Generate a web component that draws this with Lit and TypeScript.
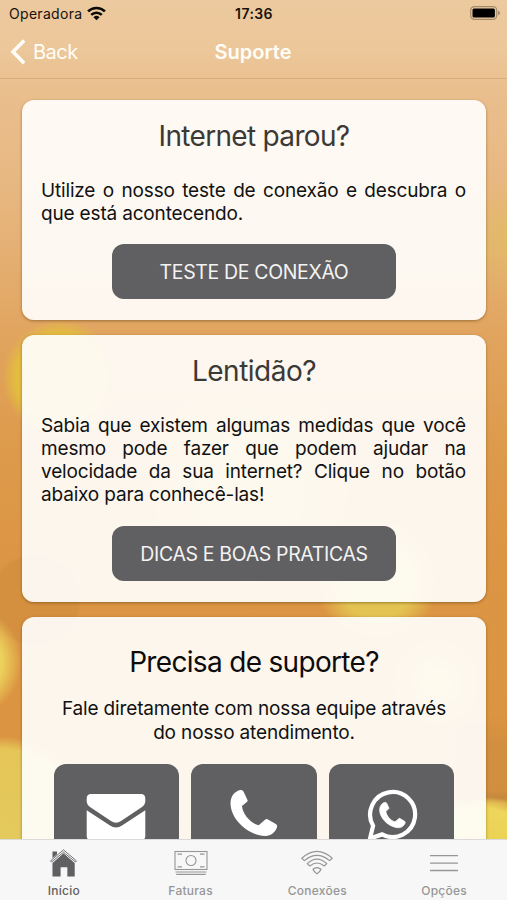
import { LitElement, html, css } from "lit";
import { customElement } from "lit/decorators.js";

const phonePath =
  "M4 3.5C6 1.6 8 .5 10 .3C11.5 .2 12.3 .8 13 2L17 10.4C17.2 11.2 17.1 11.7 16.6 12.1L11.5 16.5C11.8 24 20.5 34.5 28.2 35.6L34.8 29.9C35.5 29.3 36.2 29.2 37 29.6L45.3 34.5C46.7 35.4 46.9 36.6 46.4 38C45 42.5 40 46.8 34.5 46.5C17 45.5 0 29.5 0 13.5C0 9.5 1.5 6 4 3.5Z";

@customElement("app-root")
export class AppRoot extends LitElement {
  static styles = css`
    :host {
      display: flex;
      flex-direction: column;
      height: 900px;
      width: 507px;
      overflow: hidden;
      box-sizing: border-box;
      font-family: Inter, "Liberation Sans", sans-serif;
      color: #111;
      background:
        radial-gradient(circle at 436px 682px, rgba(236, 208, 82, 0.9) 0 10px, rgba(236, 208, 82, 0) 50px),
        radial-gradient(circle at 377px 580px, #e3c452 0 38px, rgba(227, 196, 82, 0) 62px),
        radial-gradient(circle at 250px 490px, rgba(230, 200, 80, 0.7) 0 50px, rgba(227, 196, 82, 0) 110px),
        radial-gradient(circle at 60px 378px, #e3bd3f 0 44px, rgba(227, 189, 63, 0) 58px),
        radial-gradient(circle at -34px 662px, #ecd25c 0 36px, rgba(227, 170, 68, 0) 56px),
        radial-gradient(ellipse 40px 60px at 507px 238px, rgba(224, 190, 100, 0.75), rgba(224, 190, 100, 0)),
        radial-gradient(circle at 0 842px, #e4ca5d 0, #e5c557 93px, rgba(230, 197, 88, 0) 106px),
        radial-gradient(circle at 480px 870px, #e9ce4c 0, #eed65c 62px, rgba(236, 214, 88, 0) 74px),
        linear-gradient(rgba(209, 142, 64, 0) 715px, #d28f40 745px, #d28f40 790px, #c4883e 798px, #d9a648 803px) 100% 0 / 50px 100% no-repeat,
        radial-gradient(circle at 35px 600px, #d4903f 0 43px, rgba(212, 144, 63, 0) 47px),
        linear-gradient(#ecc99e 0, #ecc79a 50px, #eabf8e 90px, #e7b67f 200px, #e1a560 330px, #dd9a4b 450px, #dc9544 560px, #db9441 740px, #d9923f 900px);
    }
    .status {
      display: grid;
      grid-template-columns: 1fr auto 1fr;
      align-items: center;
      height: 27px;
      padding: 0 7px 0 9px;
      font-size: 14px;
      color: #17120c;
    }
    .carrier {
      display: flex;
      align-items: center;
      gap: 5px;
      letter-spacing: 0.3px;
    }
    .time {
      font-weight: 600;
      font-size: 14px;
      letter-spacing: 0.4px;
      margin-right: 1px;
    }
    .battery {
      justify-self: end;
      margin-top: -1px;
    }
    .nav {
      display: grid;
      grid-template-columns: 1fr auto 1fr;
      align-items: center;
      height: 52px;
      box-sizing: border-box;
      padding: 0 11px 1px 10px;
      color: #fffdf8;
      border-bottom: 1px solid #d6ae82;
      flex: none;
    }
    .back {
      display: flex;
      align-items: center;
      gap: 8px;
      font-size: 20px;
      letter-spacing: -0.5px;
    }
    .title {
      font-size: 20px;
      font-weight: 600;
      letter-spacing: 0;
    }
    svg {
      display: block;
      flex: none;
    }
    .content {
      flex: 1;
      min-height: 0;
      overflow: hidden;
      display: flex;
      flex-direction: column;
      gap: 15px;
      padding: 21px 21px 0 22px;
    }
    .card {
      flex: none;
      box-sizing: border-box;
      border-radius: 12px;
      background: rgba(255, 254, 252, 0.92);
      box-shadow: 0 1px 3px rgba(90, 55, 10, 0.5);
      padding: 18px 20px 0;
      display: flex;
      flex-direction: column;
      align-items: center;
    }
    .first { height: 220px; }
    .second { height: 267.4px; }
    .third { height: 320px; }
    h2 {
      margin: 0;
      font-size: 28px;
      line-height: 37px;
      font-weight: 400;
      letter-spacing: -0.68px;
      color: #3b3936;
      white-space: nowrap;
    }
    .second h2 {
      letter-spacing: -0.5px;
    }
    .third h2 {
      color: #0d0c0b;
      margin-top: 9px;
    }
    .text {
      align-self: stretch;
      margin-top: 23.5px;
      margin-left: -1px;
      font-size: 19px;
      line-height: 23.2px;
      letter-spacing: -0.17px;
    }
    .line {
      display: block;
      white-space: nowrap;
    }
    .full {
      text-align: justify;
      text-align-last: justify;
      white-space: normal;
    }
    .third .text {
      text-align: center;
      margin-top: 16px;
      margin-left: 0;
      letter-spacing: -0.15px;
    }
    .button {
      width: 284px;
      height: 54.4px;
      box-sizing: border-box;
      padding-top: 1.5px;
      margin-top: 19.5px;
      border-radius: 12px;
      background: #605f61;
      color: #f4f3f2;
      display: flex;
      align-items: center;
      justify-content: center;
      font-size: 19.5px;
      letter-spacing: -0.35px;
      white-space: nowrap;
    }
    .second .button {
      margin-top: 20px;
    }
    .tiles {
      display: flex;
      gap: 12.5px;
      margin-top: 20px;
    }
    .tile {
      width: 125.3px;
      height: 110px;
      border-radius: 12px;
      background: #605f61;
      display: flex;
      justify-content: center;
    }
    .tabs {
      flex: none;
      height: 61px;
      box-sizing: border-box;
      border-top: 1px solid #dadada;
      background: #f7f7f7;
      display: grid;
      grid-template-columns: repeat(4, 1fr);
    }
    .tab {
      display: flex;
      flex-direction: column;
      align-items: center;
      padding: 8px 0 0 1px;
      gap: 5px;
      color: #969696;
      font-size: 12px;
      line-height: 16px;
      font-weight: 500;
      letter-spacing: 0.25px;
    }
    .active {
      color: #606062;
    }
  `;

  private line(text: string) {
    return html`<span class="line full">${text}</span>`;
  }

  render() {
    return html`
      <div class="status">
        <div class="carrier">
          <span>Operadora</span>
          <svg width="19" height="15" viewBox="0 0 18 14" fill="none" stroke="#0c0a07" stroke-width="2.5">
            <path d="M1 5A11.5 11.5 0 0 1 17 5" />
            <path d="M4 8.3A7.2 7.2 0 0 1 14 8.3" />
            <path d="M9 13.4L6.1 10.5A4.2 4.2 0 0 1 11.9 10.5Z" fill="#0c0a07" stroke="none" />
          </svg>
        </div>
        <span class="time">17:36</span>
        <svg class="battery" width="30" height="14" viewBox="0 0 30 14">
          <rect x=".7" y=".7" width="26" height="12.6" rx="3.6" fill="none" stroke="#a38c6d" stroke-width="1.2" />
          <rect x="2.5" y="2.4" width="22.4" height="9.2" rx="1.5" fill="#000" />
          <path d="M28 4.8Q30 5.2 30 7T28 9.2Z" fill="#a38c6d" />
        </svg>
      </div>
      <div class="nav">
        <div class="back">
          <svg width="15" height="26" viewBox="0 0 15 26" fill="none" stroke="#fffdf8" stroke-width="3.6">
            <path d="M14.2 1.5L3 12.8L14.2 24.2" />
          </svg>
          <span>Back</span>
        </div>
        <span class="title">Suporte</span>
      </div>
      <div class="content">
        <section class="card first">
          <h2>Internet parou?</h2>
          <div class="text">
            ${this.line("Utilize o nosso teste de conexão e descubra o")}
            <span class="line">que está acontecendo.</span>
          </div>
          <div class="button">TESTE DE CONEXÃO</div>
        </section>
        <section class="card second">
          <h2>Lentidão?</h2>
          <div class="text">
            ${this.line("Sabia que existem algumas medidas que você")}
            ${this.line("mesmo pode fazer que podem ajudar na")}
            ${this.line("velocidade da sua internet? Clique no botão")}
            <span class="line">abaixo para conhecê-las!</span>
          </div>
          <div class="button">DICAS E BOAS PRATICAS</div>
        </section>
        <section class="card third">
          <h2>Precisa de suporte?</h2>
          <div class="text">
            <span class="line">Fale diretamente com nossa equipe através</span>
            <span class="line">do nosso atendimento.</span>
          </div>
          <div class="tiles">
            <div class="tile">
              <svg width="60" height="80" viewBox="0 0 60 80" fill="#fff">
                <path d="M5 30H55Q59.3 30 59.3 34.5V37Q59.3 40.5 56 43L35 57Q30 60.5 25 57L4 43Q.7 40.5 .7 37V34.5Q.7 30 5 30Z" />
                <path d="M.7 46.2L24 61.5Q30 65.5 36 61.5L59.3 46.2V72Q59.3 76 55 76H5Q.7 76 .7 72Z" />
              </svg>
            </div>
            <div class="tile">
              <svg width="48" height="80" viewBox="0 0 48 80" fill="#fff">
                <path transform="translate(.5 25.6)" d=${phonePath} />
              </svg>
            </div>
            <div class="tile">
              <svg width="54" height="80" viewBox="0 0 54 80" fill="none">
                <path d="M8.1 61.7A22.5 22.5 0 1 1 17.1 70.4L5 74.6Z" stroke="#fff" stroke-width="4.2" />
                <path transform="translate(14.6 38.2) scale(.55)" d=${phonePath} fill="#fff" stroke="#fff" stroke-width="1.2" stroke-linejoin="round" />
              </svg>
            </div>
          </div>
        </section>
      </div>
      <div class="tabs">
        <div class="tab active">
          <svg width="29" height="30" viewBox="0 0 30 30">
            <path d="M3.6 3H8.3V6.5L3.6 11Z" fill="#606062" />
            <path d="M15 5L26.6 15V29H19V19.5H12V29H3.6V15Z" fill="#606062" />
            <path d="M2 13.6L15 2.4L28 13.6" fill="none" stroke="#f7f7f7" stroke-width="3.4" />
            <path d="M1.6 12.8L15 1.4L28.4 12.8L27.4 14L15 3.8L2.6 14Z" fill="#f7f7f7" stroke="#606062" stroke-width=".9" />
          </svg>
          <span>Início</span>
        </div>
        <div class="tab">
          <svg width="34" height="30" viewBox="0 0 34 30" fill="none" stroke="#969696" stroke-width="1.1">
            <rect x="1" y="3.5" width="32" height="18" />
            <circle cx="17" cy="12.5" r="5" />
            <path d="M3.5 6.1H8M26 6.1H30.5M3.5 18.9H8M26 18.9H30.5" />
            <path d="M1.5 24H32.5M2.2 26.4H31.8" />
          </svg>
          <span>Faturas</span>
        </div>
        <div class="tab">
          <svg width="34" height="30" viewBox="0 0 34 30" fill="none" stroke="#969696" stroke-width="1.2" stroke-linejoin="round">
            <path d="M1.8 10.3Q17-3.4 32.2 10.3L29.6 12.6Q17 2 4.4 12.6Z" />
            <path d="M7.2 15.6Q17 6.5 26.8 15.6L24.2 18Q17 12 9.8 18Z" />
            <path d="M13 21.3Q17 17.9 21 21.3Q20.4 23.2 17 25.9Q13.6 23.2 13 21.3Z" />
          </svg>
          <span>Conexões</span>
        </div>
        <div class="tab">
          <svg width="28" height="30" viewBox="0 0 28 30" stroke="#969696" stroke-width="1.3">
            <path d="M0 7.7H28M0 15.1H28M0 22.5H28" />
          </svg>
          <span>Opções</span>
        </div>
      </div>
    `;
  }
}
